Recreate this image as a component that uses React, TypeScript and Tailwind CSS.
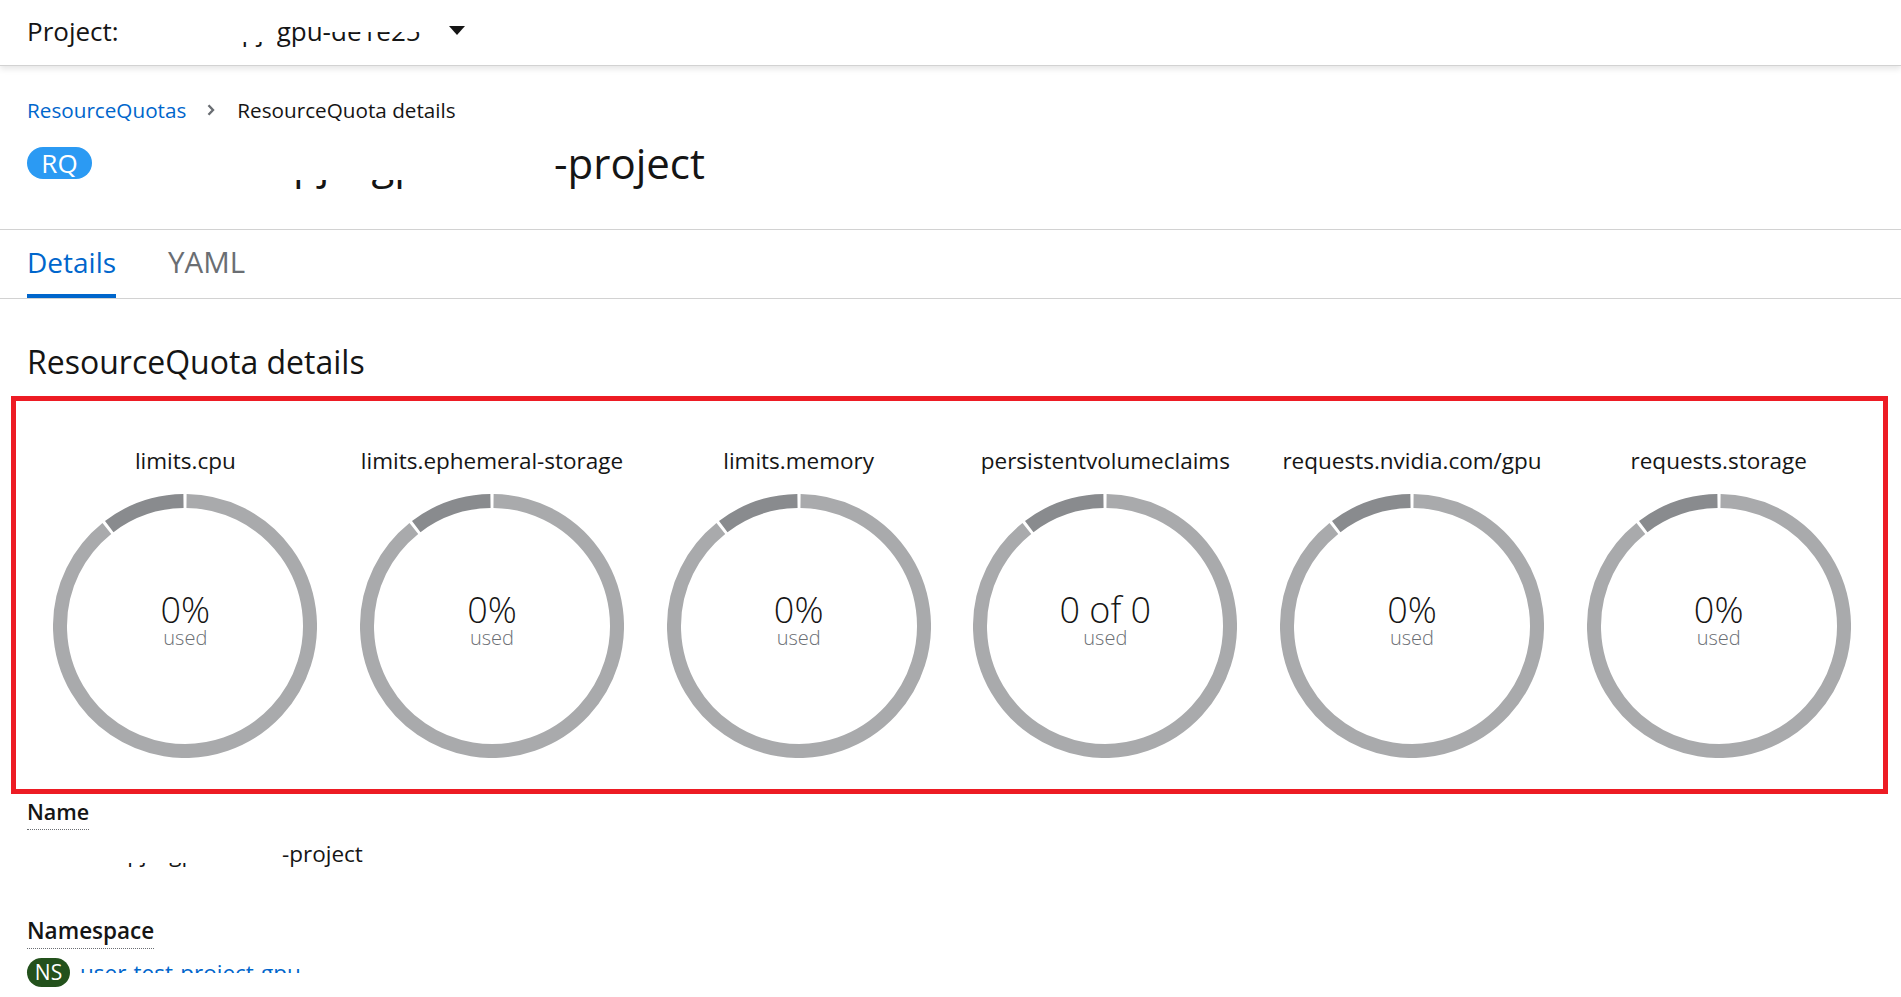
import React from "react";

type DonutProps = { label: string; value: string };

function pt(a: number, r: number, c: number): string {
  const rad = (a * Math.PI) / 180;
  return `${(c + r * Math.sin(rad)).toFixed(2)} ${(c - r * Math.cos(rad)).toFixed(2)}`;
}

function Donut({ label, value }: DonutProps) {
  const c = 132;
  const r = 125;
  const light = `M ${pt(0.7, r, c)} A ${r} ${r} 0 1 1 ${pt(321.3, r, c)}`;
  const dark = `M ${pt(322.7, r, c)} A ${r} ${r} 0 0 1 ${pt(359.3, r, c)}`;
  return (
    <div className="flex flex-col items-center">
      <div className="whitespace-nowrap text-[22.5px] leading-[30px] text-[#151515]">{label}</div>
      <div className="relative mt-[18px] h-[264px] w-[264px]">
        <svg width="264" height="264" viewBox="0 0 264 264">
          <path d={light} fill="none" stroke="#a9aaac" strokeWidth="14" />
          <path d={dark} fill="none" stroke="#898b8e" strokeWidth="14" />
        </svg>
        <div className="absolute inset-0 flex flex-col items-center justify-center pb-[12px]">
          <div className="text-[36px] font-light leading-[38px] text-[#151515]">{value}</div>
          <div className="mt-[-2px] text-[20px] font-light leading-[22px] text-[#6a6e73]">used</div>
        </div>
      </div>
    </div>
  );
}

const quotas: DonutProps[] = [
  { label: "limits.cpu", value: "0%" },
  { label: "limits.ephemeral-storage", value: "0%" },
  { label: "limits.memory", value: "0%" },
  { label: "persistentvolumeclaims", value: "0 of 0" },
  { label: "requests.nvidia.com/gpu", value: "0%" },
  { label: "requests.storage", value: "0%" },
];

export default function App() {
  return (
    <div className="h-[997px] overflow-hidden bg-white font-['Open_Sans','Liberation_Sans',sans-serif] text-[#151515]">
      {/* Masthead / project selector */}
      <header className="relative z-10 flex h-[66px] items-center border-b border-[#d2d2d2] px-[27px] pb-[4px] shadow-[0_3px_6px_rgba(3,3,3,0.10)]">
        <span className="text-[26px] leading-[34px]">Project:</span>
        <span className="relative ml-[7px] inline-block h-[34px] w-[151px] overflow-hidden whitespace-nowrap text-[26px] leading-[34px]">
          user-test-pj-t-
          <span className="absolute inset-x-0 top-0 h-[28px] bg-white" />
        </span>
        <span className="relative inline-block h-[34px] overflow-hidden whitespace-nowrap text-[26px] leading-[34px]">
          gpu-
          <span className="absolute inset-x-0 top-0 h-[12px] bg-white" />
        </span>
        <span className="relative inline-block h-[34px] overflow-hidden whitespace-nowrap text-[26px] leading-[34px]">
          de1e25
          <span className="absolute inset-x-0 top-0 h-[18px] bg-white" />
        </span>
        <svg className="ml-[28px]" width="16" height="9" viewBox="0 0 16 9">
          <path d="M0 0 H16 L8 9 Z" fill="#151515" />
        </svg>
      </header>

      {/* Breadcrumb */}
      <nav className="mt-[30px] flex items-center px-[27px] text-[20.7px] leading-[28px]">
        <span className="text-[#0066cc]">ResourceQuotas</span>
        <svg className="ml-[21px] mr-[22px]" width="8" height="12" viewBox="0 0 8 12">
          <path d="M1.5 1.2 L6 6 L1.5 10.8" fill="none" stroke="#6a6e73" strokeWidth="2.4" />
        </svg>
        <span className="text-[#151515]">ResourceQuota details</span>
      </nav>

      {/* Title */}
      <div className="mt-[13px] flex items-center px-[27px]">
        <span className="flex h-[32px] w-[65px] items-center justify-center rounded-full bg-[#2b9af3] pb-[1px] text-[26px] font-medium leading-[32px] text-white">
          RQ
        </span>
        <span className="relative ml-[14px] inline-block h-[52px] w-[448px] overflow-hidden whitespace-nowrap text-[42px] leading-[52px]">
          user-test-pj-t-gpu-de1e25
          <span className="absolute inset-x-0 top-0 h-[43px] bg-white" />
        </span>
        <span className="text-[42px] leading-[52px]">-project</span>
      </div>

      {/* Tabs */}
      <div className="mt-[40px] flex h-[70px] gap-[52px] border-y border-[#d2d2d2] px-[27px]">
        <div className="relative flex items-center pb-[4px] text-[28px] leading-[36px] text-[#0066cc]">
          Details
          <span className="absolute inset-x-0 bottom-0 h-[4px] bg-[#0066cc]" />
        </div>
        <div className="flex items-center pb-[4px] text-[29.5px] leading-[36px] text-[#6a6e73]">YAML</div>
      </div>

      {/* Section heading */}
      <h2 className="mt-[43px] px-[27px] text-[32px] font-normal leading-[40px]">ResourceQuota details</h2>

      {/* Quota charts (highlighted) */}
      <div className="mt-[14px] ml-[11px] mr-[13px] border-[5px] border-[#ed1c24] pb-[31px] pl-[16px] pr-[11px] pt-[45px]">
        <div className="grid grid-cols-6">
          {quotas.map((q) => (
            <Donut key={q.label} label={q.label} value={q.value} />
          ))}
        </div>
      </div>

      {/* Details list */}
      <div className="flex flex-col items-start px-[27px]">
        <div className="mt-[4px] border-b border-dotted border-[#6a6e73] pb-[3px] text-[21.5px] font-semibold leading-[28px]">
          Name
        </div>
        <div className="mt-[10px] flex items-center">
          <span className="relative inline-block h-[28px] w-[255px] overflow-hidden whitespace-nowrap text-[22.5px] leading-[28px]">
            user-test-pj-t-gpu-de1e25
            <span className="absolute inset-x-0 top-0 h-[23px] bg-white" />
          </span>
          <span className="text-[22.5px] leading-[28px]">-project</span>
        </div>

        <div className="mt-[49px] border-b border-dotted border-[#6a6e73] pb-[3px] text-[22.5px] font-semibold leading-[28px]">
          Namespace
        </div>
        <div className="mt-[9px] flex items-center">
          <span className="flex h-[29px] w-[43px] items-center justify-center rounded-full bg-[#23511c] text-[21px] leading-[29px] text-white">
            NS
          </span>
          <span className="relative ml-[10px] inline-block h-[29px] w-[225px] overflow-hidden whitespace-nowrap text-[22.5px] leading-[29px] text-[#0066cc]">
            user-test-project-gpu-de1e25
            <span className="absolute inset-x-0 top-[15px] bottom-0 bg-white" />
          </span>
        </div>
      </div>
    </div>
  );
}
